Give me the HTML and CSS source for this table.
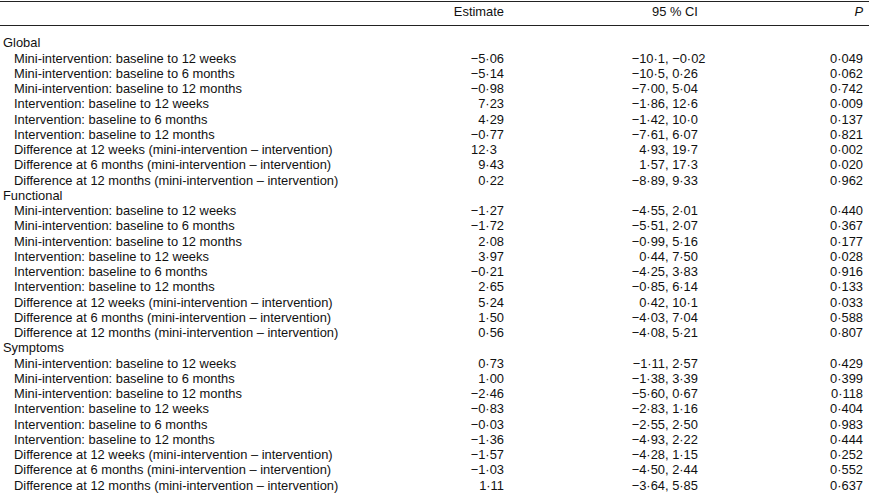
FILE: index.html
```html
<!DOCTYPE html>
<html lang="en">
<head>
<meta charset="utf-8">
<title>Table</title>
<link rel="stylesheet" href="styles.css">
</head>
<body>
<table class="results">
  <colgroup>
    <col class="c-label">
    <col class="c-est">
    <col class="c-ci">
    <col class="c-p">
  </colgroup>
  <thead>
    <tr>
      <th class="h-label"></th>
      <th class="h-est">Estimate</th>
      <th class="h-ci">95 % CI</th>
      <th class="h-p"><i>P</i></th>
    </tr>
  </thead>
  <tbody>
    <tr class="group first"><td colspan="4">Global</td></tr>
    <tr><td class="lbl">Mini-intervention: baseline to 12 weeks</td><td class="est">−5·06</td><td class="ci"><span class="lo">−10·1</span>, −0·02</td><td class="p">0·049</td></tr>
    <tr><td class="lbl">Mini-intervention: baseline to 6 months</td><td class="est">−5·14</td><td class="ci"><span class="lo">−10·5</span>, 0·26</td><td class="p">0·062</td></tr>
    <tr><td class="lbl">Mini-intervention: baseline to 12 months</td><td class="est">−0·98</td><td class="ci"><span class="lo">−7·00</span>, 5·04</td><td class="p">0·742</td></tr>
    <tr><td class="lbl">Intervention: baseline to 12 weeks</td><td class="est">7·23</td><td class="ci"><span class="lo">−1·86</span>, 12·6</td><td class="p">0·009</td></tr>
    <tr><td class="lbl">Intervention: baseline to 6 months</td><td class="est">4·29</td><td class="ci"><span class="lo">−1·42</span>, 10·0</td><td class="p">0·137</td></tr>
    <tr><td class="lbl">Intervention: baseline to 12 months</td><td class="est">−0·77</td><td class="ci"><span class="lo">−7·61</span>, 6·07</td><td class="p">0·821</td></tr>
    <tr><td class="lbl">Difference at 12 weeks (mini-intervention – intervention)</td><td class="est one">12·3</td><td class="ci"><span class="lo">4·93</span>, 19·7</td><td class="p">0·002</td></tr>
    <tr><td class="lbl">Difference at 6 months (mini-intervention – intervention)</td><td class="est">9·43</td><td class="ci"><span class="lo">1·57</span>, 17·3</td><td class="p">0·020</td></tr>
    <tr><td class="lbl">Difference at 12 months (mini-intervention – intervention)</td><td class="est">0·22</td><td class="ci"><span class="lo">−8·89</span>, 9·33</td><td class="p">0·962</td></tr>

    <tr class="group"><td colspan="4">Functional</td></tr>
    <tr><td class="lbl">Mini-intervention: baseline to 12 weeks</td><td class="est">−1·27</td><td class="ci"><span class="lo">−4·55</span>, 2·01</td><td class="p">0·440</td></tr>
    <tr><td class="lbl">Mini-intervention: baseline to 6 months</td><td class="est">−1·72</td><td class="ci"><span class="lo">−5·51</span>, 2·07</td><td class="p">0·367</td></tr>
    <tr><td class="lbl">Mini-intervention: baseline to 12 months</td><td class="est">2·08</td><td class="ci"><span class="lo">−0·99</span>, 5·16</td><td class="p">0·177</td></tr>
    <tr><td class="lbl">Intervention: baseline to 12 weeks</td><td class="est">3·97</td><td class="ci"><span class="lo">0·44</span>, 7·50</td><td class="p">0·028</td></tr>
    <tr><td class="lbl">Intervention: baseline to 6 months</td><td class="est">−0·21</td><td class="ci"><span class="lo">−4·25</span>, 3·83</td><td class="p">0·916</td></tr>
    <tr><td class="lbl">Intervention: baseline to 12 months</td><td class="est">2·65</td><td class="ci"><span class="lo">−0·85</span>, 6·14</td><td class="p">0·133</td></tr>
    <tr><td class="lbl">Difference at 12 weeks (mini-intervention – intervention)</td><td class="est">5·24</td><td class="ci"><span class="lo">0·42</span>, 10·1</td><td class="p">0·033</td></tr>
    <tr><td class="lbl">Difference at 6 months (mini-intervention – intervention)</td><td class="est">1·50</td><td class="ci"><span class="lo">−4·03</span>, 7·04</td><td class="p">0·588</td></tr>
    <tr><td class="lbl">Difference at 12 months (mini-intervention – intervention)</td><td class="est">0·56</td><td class="ci"><span class="lo">−4·08</span>, 5·21</td><td class="p">0·807</td></tr>

    <tr class="group"><td colspan="4">Symptoms</td></tr>
    <tr><td class="lbl">Mini-intervention: baseline to 12 weeks</td><td class="est">0·73</td><td class="ci"><span class="lo">−1·11</span>, 2·57</td><td class="p">0·429</td></tr>
    <tr><td class="lbl">Mini-intervention: baseline to 6 months</td><td class="est">1·00</td><td class="ci"><span class="lo">−1·38</span>, 3·39</td><td class="p">0·399</td></tr>
    <tr><td class="lbl">Mini-intervention: baseline to 12 months</td><td class="est">−2·46</td><td class="ci"><span class="lo">−5·60</span>, 0·67</td><td class="p">0·118</td></tr>
    <tr><td class="lbl">Intervention: baseline to 12 weeks</td><td class="est">−0·83</td><td class="ci"><span class="lo">−2·83</span>, 1·16</td><td class="p">0·404</td></tr>
    <tr><td class="lbl">Intervention: baseline to 6 months</td><td class="est">−0·03</td><td class="ci"><span class="lo">−2·55</span>, 2·50</td><td class="p">0·983</td></tr>
    <tr><td class="lbl">Intervention: baseline to 12 months</td><td class="est">−1·36</td><td class="ci"><span class="lo">−4·93</span>, 2·22</td><td class="p">0·444</td></tr>
    <tr><td class="lbl">Difference at 12 weeks (mini-intervention – intervention)</td><td class="est">−1·57</td><td class="ci"><span class="lo">−4·28</span>, 1·15</td><td class="p">0·252</td></tr>
    <tr><td class="lbl">Difference at 6 months (mini-intervention – intervention)</td><td class="est">−1·03</td><td class="ci"><span class="lo">−4·50</span>, 2·44</td><td class="p">0·552</td></tr>
    <tr class="last"><td class="lbl">Difference at 12 months (mini-intervention – intervention)</td><td class="est">1·11</td><td class="ci"><span class="lo">−3·64</span>, 5·85</td><td class="p">0·637</td></tr>
  </tbody>
</table>
</body>
</html>
```

FILE: styles.css
```css
html, body {
  margin: 0;
  padding: 0;
  background: #ffffff;
}

body {
  font-family: "Liberation Sans", Arial, Helvetica, sans-serif;
  font-size: 12.9px;
  line-height: 15.25px;
  color: #111111;
}

.results {
  width: 100%;
  margin-top: 1px;
  border-collapse: collapse;
  table-layout: fixed;
  border-top: 1px solid #222222;
  border-bottom: 1px solid #222222;
}

.c-label { width: 430px; }
.c-est { width: 74px; }
.c-ci { width: 276px; }
.c-p { width: 89px; }

.results th,
.results td {
  padding: 0;
  font-weight: normal;
  white-space: nowrap;
  vertical-align: top;
}

.results thead th {
  padding-top: 2px;
  padding-bottom: 6px;
  border-bottom: 1px solid #222222;
}

.results .h-est { text-align: right; }
.results .h-ci { text-align: left; padding-left: 148px; }
.results .h-p { text-align: right; padding-right: 6px; }
.h-p i { font-style: italic; }

.results .group td {
  padding-left: 3px;
}

.results .group.first td {
  padding-top: 9px;
}

.results .last td {
  padding-bottom: 11px;
}

.results .lbl {
  padding-left: 14px;
}

.results .est {
  text-align: right;
}

.results .est.one {
  padding-right: 0.556em;
}

.ci .lo {
  display: inline-block;
  width: 161px;
  text-align: right;
}

.results .p {
  text-align: right;
  padding-right: 6px;
}
```
